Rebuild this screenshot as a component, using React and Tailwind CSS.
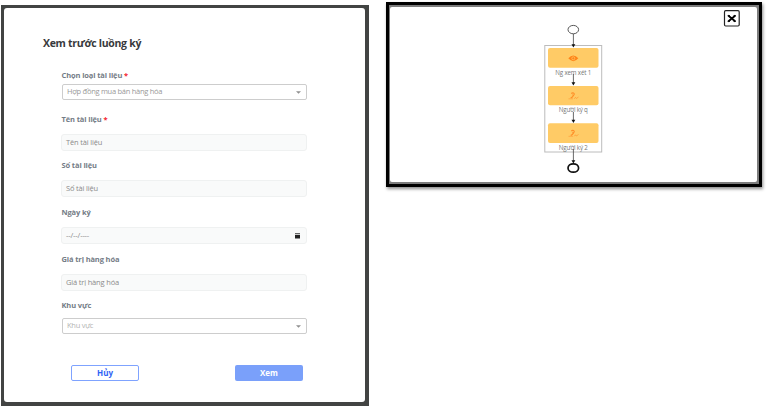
import React from "react";

function Label({ children, required, className }) {
  return (
    <div className={`h-3 pl-[0.5px] whitespace-nowrap text-[7.5px] leading-3 font-bold tracking-[-0.12px] text-[#747c86] ${className}`}>
      {children}
      {required && <span className="text-[#f5222d]"> *</span>}
    </div>
  );
}

function Select({ children, className }) {
  return (
    <div className={`ml-px flex h-4 w-[245px] items-center justify-between rounded-[2px] border border-[#cdcdcd] bg-white pr-[5px] pl-1 text-[7.5px] tracking-[-0.27px] whitespace-nowrap ${className}`}>
      <span>{children}</span>
      <svg className="h-[3px] w-[5px]" viewBox="0 0 5 3">
        <path d="M0 0.3h5L2.5 2.8z" fill="#909090" />
      </svg>
    </div>
  );
}

function Input({ children, icon, className }) {
  return (
    <div className={`flex h-[17px] w-[246px] items-center justify-between rounded-[3px] border border-[#eff1f1] bg-[#f9fafa] pr-[6.5px] pl-[4px] text-[7.5px] tracking-[-0.17px] whitespace-nowrap text-[#8b8b8b] ${className}`}>
      <span>{children}</span>
      {icon}
    </div>
  );
}

function CalendarIcon() {
  return (
    <svg className="h-[6px] w-[5px]" viewBox="0 0 5 6">
      <path d="M0 0h5v1.300H0z" fill="#666" />
      <path d="M0 2h5v3.500H0z" fill="#222" />
    </svg>
  );
}

function SignerMark({ y }) {
  return (
    <g transform={`translate(0 ${y})`} fill="none" stroke="#ff8f28">
      <path d="M571.300 -2.600c1.600-1.200 3.400-.2 2.800 1.100l-1.800 2.600-1.600 1" strokeWidth="1.200" />
      <path d="M572.200 -1.300l1.600 1" strokeWidth=".8" />
      <path d="M568.500 2.800h4.500" strokeWidth=".5" />
      <path d="M574.200 2.800l1.300-1.500.8 1.200 2.200-1.500" strokeWidth=".6" />
    </g>
  );
}

function Arrow({ from, to }) {
  return (
    <g>
      <path d={`M573.4 ${from}V${to - 2}`} stroke="#444" strokeWidth=".8" />
      <path d={`M571.5 ${to - 3.3}h3.800L573.400 ${to}z`} fill="#111" />
    </g>
  );
}

function Flow() {
  const names = { fontFamily: "'Open Sans', sans-serif", fontSize: "6.2px" };
  return (
    <svg className="h-[175px] w-[367px]" viewBox="390 7 367 175">
      <rect x="544.8" y="45.5" width="56.900" height="106.500" fill="#fff" stroke="#bcbcbc" />
      <g fill="#ffcb66">
        <rect x="548" y="48" width="50.500" height="19.700" rx="2" />
        <rect x="548" y="86" width="50.500" height="19.200" rx="2" />
        <rect x="548" y="123.300" width="50.500" height="19.700" rx="2" />
      </g>
      <ellipse cx="573.300" cy="29.600" rx="5.300" ry="4.200" fill="#fff" stroke="#444" strokeWidth=".9" />
      <ellipse cx="573.300" cy="168" rx="5.300" ry="4.200" fill="#fff" stroke="#111" strokeWidth="1.700" />
      <path d="M568.300 58.300q5-5.800 10 0q-5 5.800-10 0z" fill="#ff8419" />
      <circle cx="573.300" cy="58.300" r="1.500" fill="none" stroke="#ffcb66" strokeWidth=".7" />
      <SignerMark y={96} />
      <SignerMark y={133.500} />
      <g fill="#777" textAnchor="middle" style={names}>
        <text x="573.300" y="74.600" textLength="36">Ng xem xét 1</text>
        <text x="573.300" y="112" textLength="29">Người ký q</text>
        <text x="573.300" y="149.500" textLength="29">Người ký 2</text>
      </g>
      <Arrow from={34} to={47.500} />
      <Arrow from={74} to={85.500} />
      <Arrow from={112} to={123} />
      <Arrow from={149} to={163.500} />
      <rect x="724.500" y="10.700" width="14.700" height="15.300" rx="1.200" fill="#fff" stroke="#222" strokeWidth="1.200" />
      <path d="M728.200 15.500l7.200 6M735.400 15.500l-7.200 6" stroke="#000" strokeWidth="1.800" />
      <path d="M727.500 15.500h2.500M733.500 15.500h2.500M727.500 21.500h2.500M733.500 21.500h2.500" stroke="#000" strokeWidth=".7" />
    </svg>
  );
}

export default function App() {
  return (
    <div className="flex h-[406px] w-[768px] items-start overflow-hidden bg-white font-['Open_Sans',sans-serif]">
      <section className="mt-[5px] ml-px h-[401px] w-[368px] shrink-0 border-t-[3px] border-r-4 border-b-4 border-l-[3px] border-[#424443] bg-[#424443]">
        <div className="flex h-full flex-col rounded-[3px] bg-white pt-[28px] pl-[39px]">
          <h1 className="h-[14px] text-[10.5px] leading-[14px] font-bold tracking-[-0.3px] whitespace-nowrap text-[#38393c]">Xem trước luồng ký</h1>
          <div className="pl-[18px]">
            <Label required className="mt-[19px]">Chọn loại tài liệu</Label>
            <Select className="mt-[3px] text-[#999]">Hợp đồng mua bán hàng hóa</Select>
            <Label required className="mt-[13px]">Tên tài liệu</Label>
            <Input className="mt-[9px]">Tên tài liệu</Input>
            <Label className="mt-[8px]">Số tài liệu</Label>
            <Input className="mt-[9px]">Số tài liệu</Input>
            <Label className="mt-[9px]">Ngày ký</Label>
            <Input className="mt-[9px]" icon={<CalendarIcon />}>--/--/----</Input>
            <Label className="mt-[9px]">Giá trị hàng hóa</Label>
            <Input className="mt-[9px]">Giá trị hàng hóa</Input>
            <Label className="mt-[8px]">Khu vực</Label>
            <Select className="mt-[7px] text-[#b4b4b4]">Khu vực</Select>
            <div className="mt-[31px] ml-[10px] flex gap-24 text-[8px] font-bold">
              <button className="h-4 w-[68px] rounded-[2px] border border-[#7fa3ff] bg-white leading-[14px] text-[#2f62f5]">Hủy</button>
              <button className="h-4 w-[68px] rounded-[2px] bg-[#7aa0fa] leading-4 text-white">Xem</button>
            </div>
          </div>
        </div>
      </section>
      <section className="mt-[2px] ml-[17px] h-[185px] w-[376px] shrink-0 border-[3px] border-black bg-[#7d7d7d] pt-[2px] pl-px shadow-[1px_2px_3px_rgba(0,0,0,0.45)]">
        <div className="h-[175px] w-[367px] overflow-hidden rounded-[2px] bg-white">
          <Flow />
        </div>
      </section>
    </div>
  );
}
